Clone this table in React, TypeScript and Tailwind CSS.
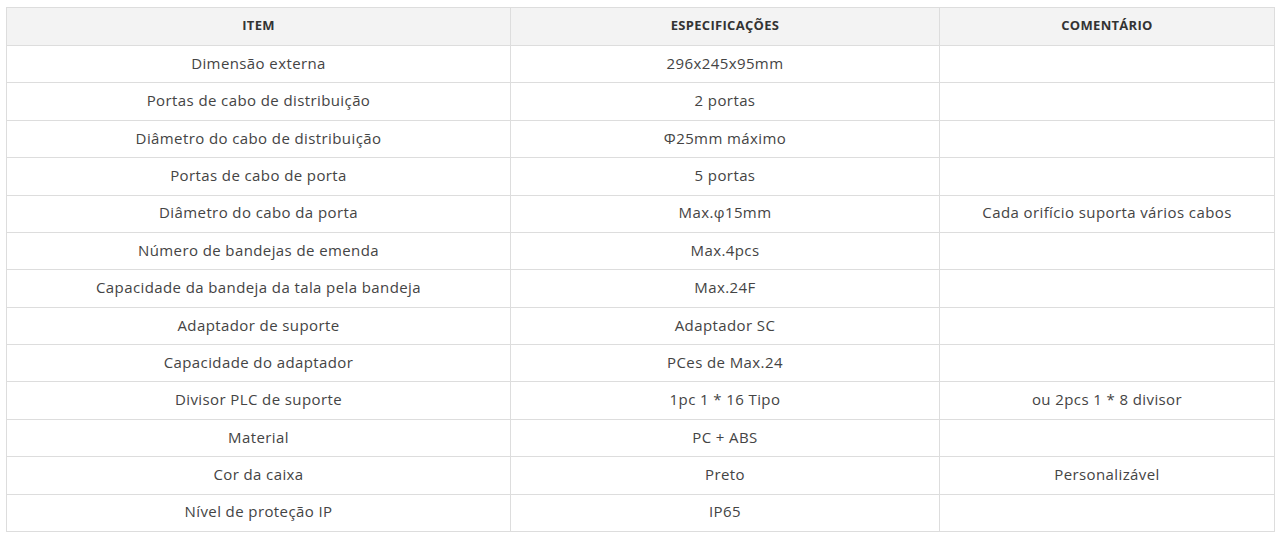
const rows: [string, string, string][] = [
  ['Dimensão externa', '296x245x95mm', ''],
  ['Portas de cabo de distribuição', '2 portas', ''],
  ['Diâmetro do cabo de distribuição', 'Φ25mm máximo', ''],
  ['Portas de cabo de porta', '5 portas', ''],
  ['Diâmetro do cabo da porta', 'Max.φ15mm', 'Cada orifício suporta vários cabos'],
  ['Número de bandejas de emenda', 'Max.4pcs', ''],
  ['Capacidade da bandeja da tala pela bandeja', 'Max.24F', ''],
  ['Adaptador de suporte', 'Adaptador SC', ''],
  ['Capacidade do adaptador', 'PCes de Max.24', ''],
  ['Divisor PLC de suporte', '1pc 1 * 16 Tipo', 'ou 2pcs 1 * 8 divisor'],
  ['Material', 'PC + ABS', ''],
  ['Cor da caixa', 'Preto', 'Personalizável'],
  ['Nível de proteção IP', 'IP65', ''],
];

export default function App() {
  return (
    <div className="min-h-[540px] bg-white pl-[6px] pt-[7px] font-['Open_Sans',sans-serif] text-[#444]">
      <table className="w-[1268px] table-fixed border-collapse border border-[#ddd] text-center text-[15px] tracking-[0.4px]">
        <colgroup>
          <col className="w-[504px]" />
          <col className="w-[429px]" />
          <col className="w-[335px]" />
        </colgroup>
        <thead>
          <tr className="h-[38px] bg-[#f3f3f3] text-[13px] font-bold uppercase tracking-[0.3px] text-[#333]">
            <th className="border border-[#ddd] p-0 pb-[2px]">Item</th>
            <th className="border border-[#ddd] p-0 pb-[2px]">Especificações</th>
            <th className="border border-[#ddd] p-0 pb-[2px]">Comentário</th>
          </tr>
        </thead>
        <tbody>
          {rows.map(([item, spec, note]) => (
            <tr key={item} className="h-[37.38px]">
              <td className="border border-[#ddd] p-0 pb-[2px]">{item}</td>
              <td className="border border-[#ddd] p-0 pb-[2px]">{spec}</td>
              <td className="border border-[#ddd] p-0 pb-[2px]">{note}</td>
            </tr>
          ))}
        </tbody>
      </table>
    </div>
  );
}
